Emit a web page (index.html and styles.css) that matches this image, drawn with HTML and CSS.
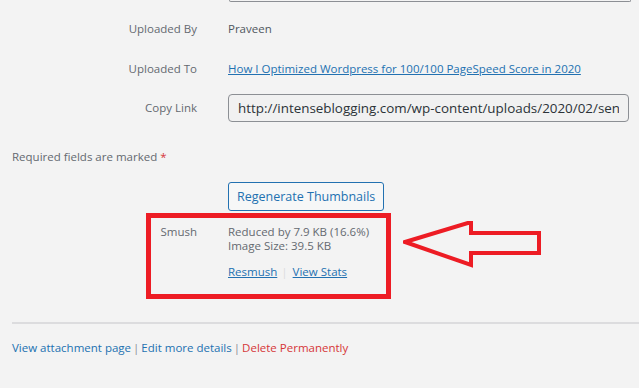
FILE: index.html
```html
<!DOCTYPE html>
<html lang="en">
<head>
  <meta charset="UTF-8">
  <title>Attachment details</title>
  <link rel="stylesheet" href="styles.css">
</head>
<body>
<div class="details">
  <div class="settings">
    <span></span>
    <div class="desc-end"></div>

    <span class="label row-by">Uploaded By</span>
    <span class="value row-by">Praveen</span>

    <span class="label row-to">Uploaded To</span>
    <span class="value row-to"><a href="#">How I Optimized Wordpress for 100/100 PageSpeed Score in 2020</a></span>

    <span class="label row-link">Copy Link</span>
    <input class="copy-link row-link" type="text" readonly value="http://intenseblogging.com/wp-content/uploads/2020/02/sendinblue-logo.png">
  </div>

  <p class="required">Required fields are marked <span class="star">*</span></p>

  <div class="settings compat">
    <span></span>
    <div><button class="button">Regenerate Thumbnails</button></div>

    <span class="label smush-label">Smush</span>
    <div class="smush">
      <div>Reduced by 7.9 KB (16.6%)</div>
      <div>Image Size: 39.5 KB</div>
      <div class="smush-links"><a href="#">Resmush</a><span class="sep">|</span><a href="#">View Stats</a></div>
    </div>
  </div>

  <hr class="divider">

  <div class="actions"><a href="#">View attachment page</a><span class="bar">|</span><a href="#">Edit more details</a><span class="bar">|</span><a href="#" class="delete">Delete Permanently</a></div>

  <!-- annotation drawn over the screenshot -->
  <div class="mark-box"></div>
  <svg class="mark-arrow" width="150" height="50" viewBox="0 0 150 50">
    <path d="M2 21 L68 1 L68 12 L136 12 L136 32 L68 32 L68 44 Z" fill="none" stroke="#ed1c24" stroke-width="4" stroke-linejoin="miter"/>
  </svg>
</div>
</body>
</html>
```

FILE: styles.css
```css
* {
  box-sizing: border-box;
}

body {
  margin: 0;
  background: #f3f3f3;
  font-family: "Open Sans", "Noto Sans", sans-serif;
  font-size: 11.5px;
  line-height: 18px;
  color: #50575e;
}

a {
  color: #2271b1;
}

.details {
  position: relative;
  width: 639px;
  height: 388px;
  overflow: hidden;
}

.settings {
  display: grid;
  grid-template-columns: 185px 401px;
  column-gap: 31px;
  align-items: center;
  padding-left: 12px;
}

.desc-end {
  height: 2px;
  border: 1px solid #8c8f94;
  border-top: 0;
  border-radius: 0 0 4px 4px;
  margin-left: 1px;
  margin-right: -2px;
}

.label {
  text-align: right;
  color: #646970;
}

.row-by {
  margin-top: 18px;
}

.row-to {
  margin-top: 22px;
}

.row-link {
  margin-top: 16px;
}

.copy-link {
  width: 401px;
  height: 28px;
  padding: 0 9px;
  border: 1px solid #8c8f94;
  border-radius: 4px;
  background: #f1f1f1;
  font-family: inherit;
  font-size: 13.4px;
  color: #2c3338;
}

.required {
  margin: 26px 0 0 12px;
  color: #646970;
}

.star {
  color: #d63638;
}

.compat {
  margin-top: 16px;
  align-items: start;
}

.button {
  height: 29px;
  padding: 0 8px;
  border: 1px solid #2271b1;
  border-radius: 3px;
  background: #f6f7f7;
  color: #2271b1;
  font-family: inherit;
  font-size: 12.5px;
}

.smush-label,
.smush {
  margin-top: 14px;
  color: #646970;
  line-height: 14px;
}

.smush-links {
  margin-top: 12px;
}

.sep {
  color: #dcdcde;
  margin: 0 5px 0 4px;
}

.divider {
  margin: 43px 0 0 12px;
  border: 0;
  border-top: 2px solid #dcdcde;
}

.actions {
  margin: 15px 0 0 12px;
  color: #8c8f94;
}

.actions a {
  text-decoration: none;
}

.actions a.delete {
  color: #d63638;
}

.bar {
  margin: 0 2px;
}

.mark-box {
  position: absolute;
  left: 146px;
  top: 213px;
  width: 245px;
  height: 86px;
  border: 5px solid #ed1c24;
}

.mark-arrow {
  position: absolute;
  left: 403px;
  top: 221px;
}
```
